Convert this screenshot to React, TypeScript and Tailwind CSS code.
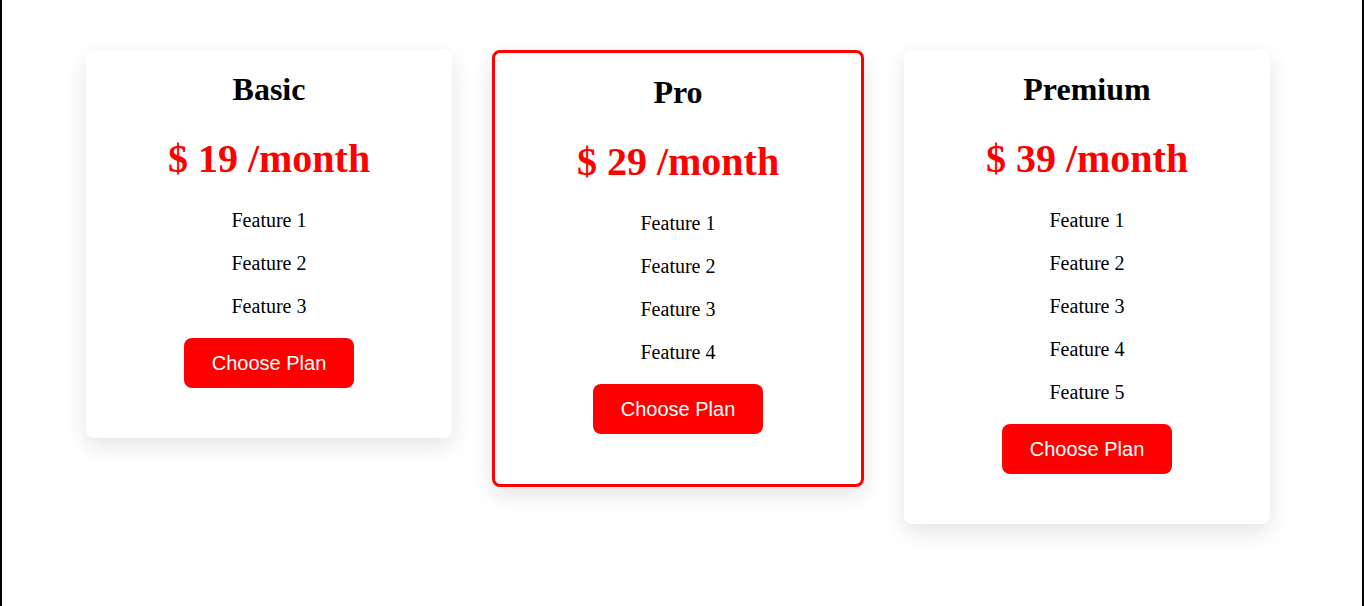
import React from 'react';

interface PlanProps {
  name: string;
  price: number;
  features: string[];
  featured?: boolean;
}

const plans: PlanProps[] = [
  { name: 'Basic', price: 19, features: ['Feature 1', 'Feature 2', 'Feature 3'] },
  {
    name: 'Pro',
    price: 29,
    features: ['Feature 1', 'Feature 2', 'Feature 3', 'Feature 4'],
    featured: true,
  },
  {
    name: 'Premium',
    price: 39,
    features: ['Feature 1', 'Feature 2', 'Feature 3', 'Feature 4', 'Feature 5'],
  },
];

const PlanCard: React.FC<PlanProps> = ({ name, price, features, featured }) => {
  // the highlighted plan gets a red border (adds 3px on each side)
  const frame = featured
    ? 'w-[372px] border-[3px] border-[#ff0000]'
    : 'w-[366px]';

  return (
    <div
      className={`${frame} flex flex-col items-center rounded-lg bg-white pt-[21px] pb-[50px] text-center shadow-[0_8px_22px_rgba(0,0,0,0.11)]`}
    >
      <h2 className="text-[32px] font-bold leading-[37px] text-black">{name}</h2>
      <p className="mt-[28px] text-[40px] font-bold leading-[46px] text-[#ff0000]">
        $ {price} /month
      </p>
      <ul className="mt-[27px] flex flex-col gap-5">
        {features.map((f) => (
          <li key={f} className="text-[20px] leading-[23px] text-black">
            {f}
          </li>
        ))}
      </ul>
      <button className="mt-5 h-[50px] w-[170px] rounded-lg bg-[#ff0000] font-['Liberation_Sans',Arial,sans-serif] text-[20px] text-white">
        Choose Plan
      </button>
    </div>
  );
};

export default function App() {
  return (
    <div className="h-[606px] border-x-2 border-black bg-white font-['Liberation_Serif','Times_New_Roman',serif]">
      <div className="flex items-start gap-10 pt-[50px] pl-[84px]">
        {plans.map((p) => (
          <PlanCard key={p.name} {...p} />
        ))}
      </div>
    </div>
  );
}
